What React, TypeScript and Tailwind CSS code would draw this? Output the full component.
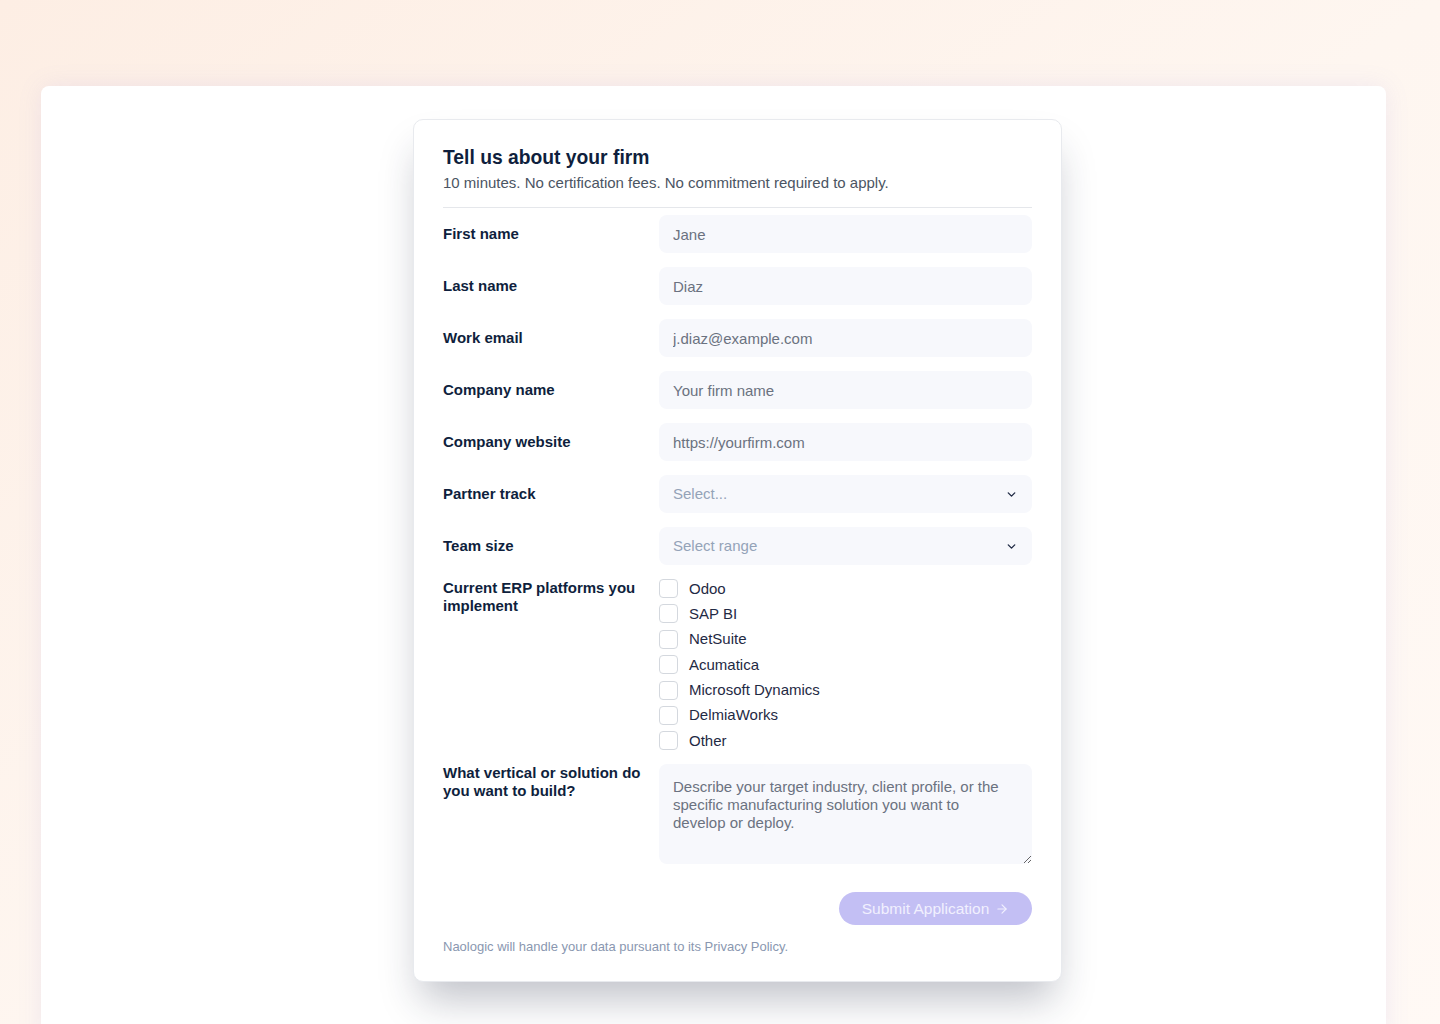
import React from "react";
import { ChevronDown, ArrowRight } from "lucide-react";

const font = { fontFamily: '"Liberation Sans", Arial, Helvetica, sans-serif' };

function Row({ label, children, center = true }: { label: React.ReactNode; children: React.ReactNode; center?: boolean }) {
  return (
    <div className={`flex ${center ? "items-center" : "items-start"}`}>
      <div className="w-[216px] shrink-0 pr-3 text-[15px] font-bold leading-[18px] text-[#0f1f3d]">{label}</div>
      <div className="flex-1">{children}</div>
    </div>
  );
}

function TextInput({ placeholder }: { placeholder: string }) {
  return (
    <input
      placeholder={placeholder}
      className="h-[38px] w-full rounded-[8px] bg-[#f7f8fc] px-[14px] text-[15px] text-[#1f2937] outline-none placeholder:text-[#6b7280]"
      style={font}
    />
  );
}

function SelectBox({ placeholder }: { placeholder: string }) {
  return (
    <div className="flex h-[38px] w-full items-center justify-between rounded-[8px] bg-[#f7f8fc] pl-[14px] pr-[14px] text-[15px] text-[#94a3b8]">
      <span>{placeholder}</span>
      <ChevronDown size={13} strokeWidth={2.5} className="text-[#1f2a44]" />
    </div>
  );
}

const platforms = ["Odoo", "SAP BI", "NetSuite", "Acumatica", "Microsoft Dynamics", "DelmiaWorks", "Other"];

export default function App() {
  return (
    <div
      className="min-h-[1024px] w-full overflow-hidden bg-gradient-to-br from-[#fdeee4] via-[#fef6f0] to-[#fff9f5] pt-[86px]"
      style={font}
    >
      <div className="ml-[41px] h-[960px] w-[1345px] rounded-t-[8px] bg-white pl-[372px] pt-[33px] shadow-[0_0_24px_rgba(140,130,230,0.12)]">
        <div className="w-[649px] rounded-[10px] border border-[#e8eaee] bg-white px-[29px] pb-[26px] pt-[26px] shadow-[0_25px_40px_-8px_rgba(30,35,60,0.28)]">
          <h2 className="text-[19.3px] font-bold leading-[24px] text-[#0f1f3d]">Tell us about your firm</h2>
          <p className="mt-[4px] text-[15px] leading-[18px] text-[#4b5563]">
            10 minutes. No certification fees. No commitment required to apply.
          </p>
          <div className="mt-[15px] h-px w-full bg-[#e5e7eb]" />

          <div className="mt-[7px] flex flex-col gap-[14px]">
            <Row label="First name"><TextInput placeholder="Jane" /></Row>
            <Row label="Last name"><TextInput placeholder="Diaz" /></Row>
            <Row label="Work email"><TextInput placeholder="j.diaz@example.com" /></Row>
            <Row label="Company name"><TextInput placeholder="Your firm name" /></Row>
            <Row label="Company website"><TextInput placeholder="https://yourfirm.com" /></Row>
            <Row label="Partner track"><SelectBox placeholder="Select..." /></Row>
            <Row label="Team size"><SelectBox placeholder="Select range" /></Row>
            <Row label={<span>Current ERP platforms you implement</span>} center={false}>
              <div className="flex flex-col gap-[6.4px]">
                {platforms.map((p) => (
                  <label key={p} className="flex h-[19px] items-center gap-[11px]">
                    <span className="h-[19px] w-[19px] shrink-0 rounded-[4px] border-[1.5px] border-[#d4d8de] bg-white" />
                    <span className="text-[15px] leading-[18px] text-[#1f2a44]">{p}</span>
                  </label>
                ))}
              </div>
            </Row>
            <Row label={<span>What vertical or solution do you want to build?</span>} center={false}>
              <textarea
                placeholder="Describe your target industry, client profile, or the specific manufacturing solution you want to develop or deploy."
                className="block h-[100px] w-full rounded-[8px] bg-[#f7f8fc] py-[14px] pl-[14px] pr-[22px] text-[15px] leading-[18px] text-[#1f2937] outline-none placeholder:text-[#6b7280]"
                style={font}
              />
            </Row>
          </div>

          <div className="mt-[28px] flex justify-end">
            <button
              className="flex h-[33px] w-[193px] items-center justify-center gap-[6px] rounded-full bg-[#c3bff4] text-[15.5px] text-[#f1f0fe]"
              style={font}
            >
              Submit Application <ArrowRight size={14} strokeWidth={2} />
            </button>
          </div>

          <p className="mt-[14px] text-[13px] leading-[16px] text-[#8a97b0]">
            Naologic will handle your data pursuant to its Privacy Policy.
          </p>
        </div>
      </div>
    </div>
  );
}
